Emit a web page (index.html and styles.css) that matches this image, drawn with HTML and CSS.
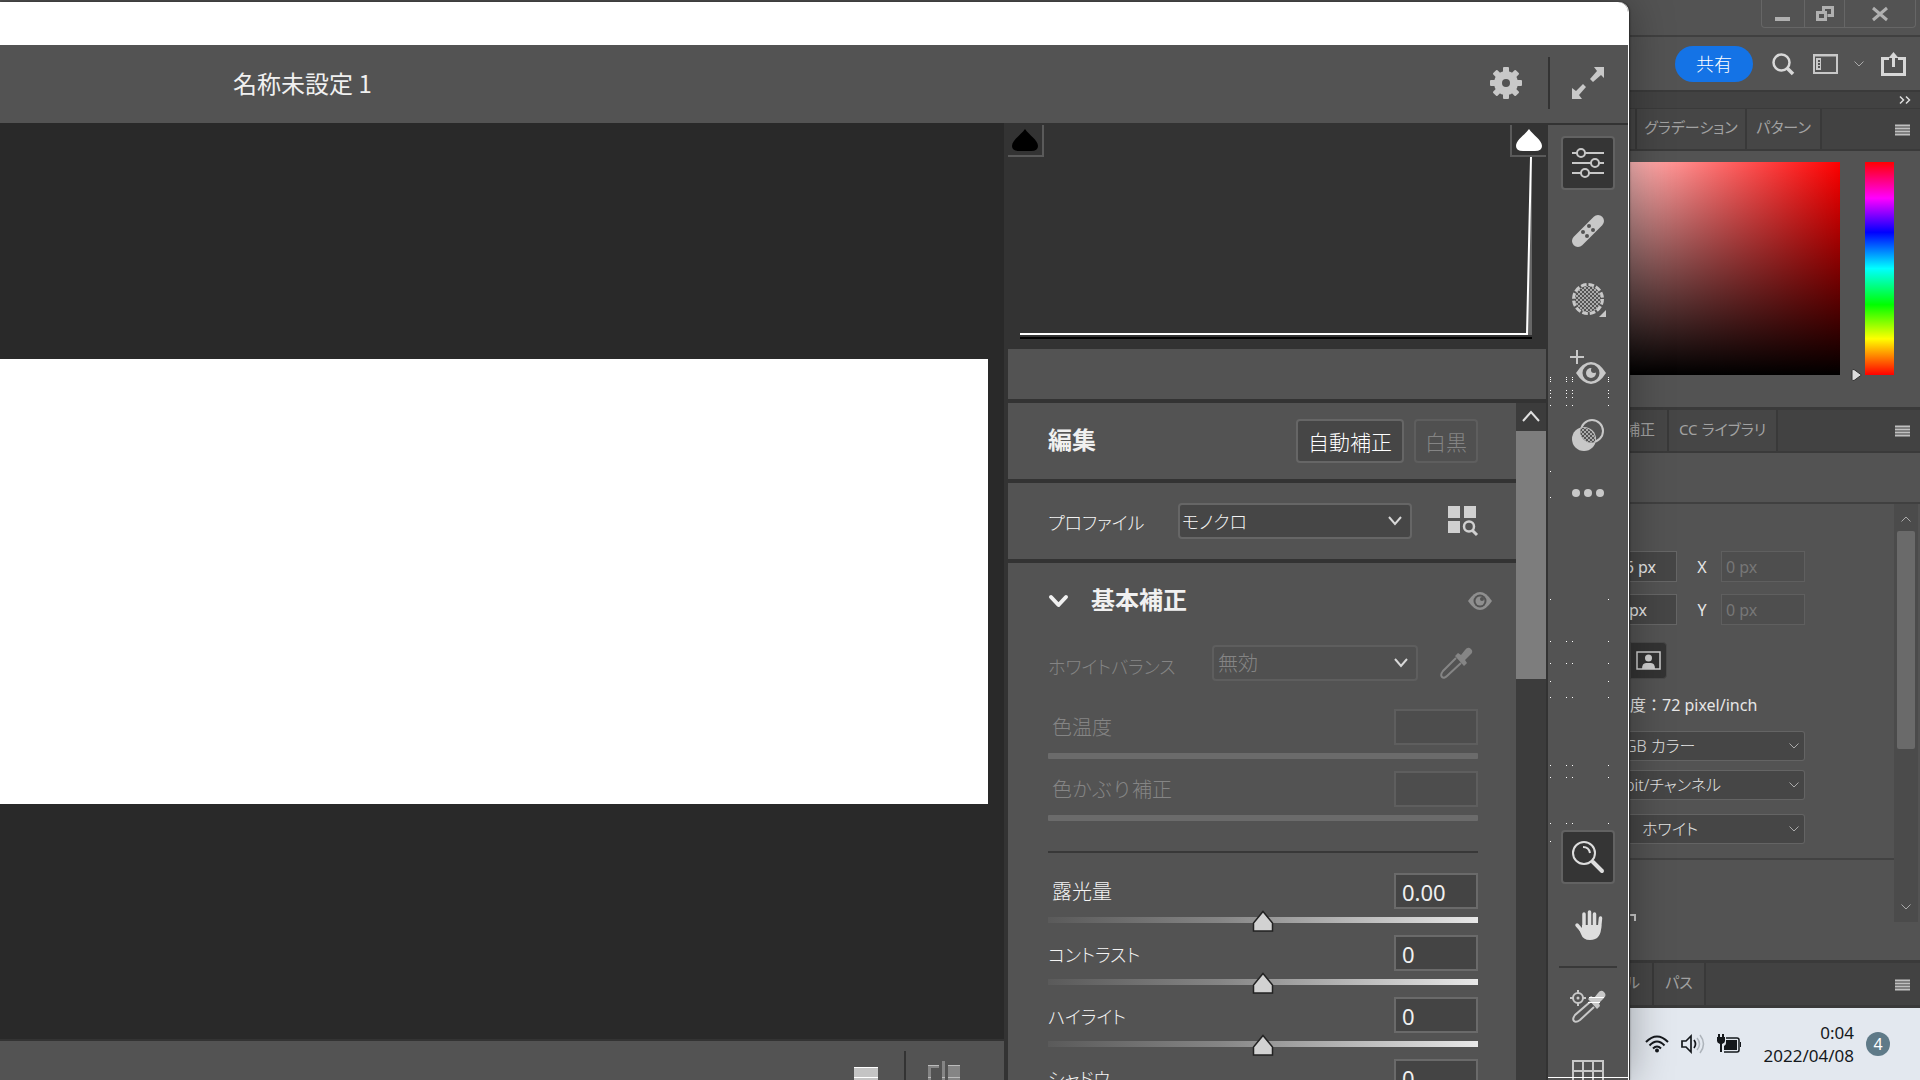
FILE: index.html
```html
<!DOCTYPE html>
<html lang="ja">
<head>
<meta charset="utf-8">
<title>Camera Raw</title>
<link rel="stylesheet" href="styles.css">
</head>
<body>
<div class="screen">
  <section class="dialog">
    <div class="titlebar"></div>
    <header class="head">
      <h1 class="doc-name">名称未設定 1</h1>
      <button class="icon-btn gear" aria-label="設定"><svg width="32" height="32" viewBox="0 0 32 32"><g fill="#c8c8c8"><g id="teeth"><rect x="13" y="0" width="6" height="32" rx="1"/><rect x="0" y="13" width="32" height="6" rx="1"/></g><use href="#teeth" transform="rotate(45 16 16)"/><circle cx="16" cy="16" r="12"/></g><circle cx="16" cy="16" r="4" fill="#535353"/></svg></button>
      <span class="head-rule"></span>
      <button class="icon-btn expand" aria-label="全画面"><svg width="32" height="32" viewBox="0 0 32 32"><path fill="#c8c8c8" d="M22 0h10v11l-3-3-8 7-3-3 7-8zM10 32H0V21l4 3 7-7 3 3-7 8z"/></svg></button>
    </header>

    <div class="work">
      <main class="preview">
        <div class="stage"><div class="picture"></div></div>
        <footer class="foot">
          <button class="icon-btn" aria-label="単一表示"><svg width="24" height="20" viewBox="0 0 24 20"><path fill="#c4c4c4" d="M0 0h24v20H0z"/><path stroke="#fff" d="M0 .5h24M0 10.500h24"/></svg></button>
          <span class="foot-rule"></span>
          <button class="icon-btn split" aria-label="補正前と補正後"><svg width="32" height="26" viewBox="0 0 32 26"><path fill="#858585" d="M0 4h11v3H3v19H0zM14 0h3v26h-3zM20 4h12v22H20z"/><path stroke="#bbb" d="M0 4.500h11M20 4.500h12M0 16.500h3m11 0h3m3 0h12"/></svg></button>
        </footer>
      </main>

      <aside class="edit">
        <div class="histogram">
          <button class="clip dark" aria-label="シャドウクリッピング"><svg width="28" height="24" viewBox="0 0 28 24"><path d="M14 1C18 7 27 12 27 18q0 5-7 5H8q-7 0-7-5C1 12 10 7 14 1z"/></svg></button>
          <svg class="graph" viewBox="0 0 512 214" preserveAspectRatio="none"><path d="M512 32 507 210h5z" fill="#666"/><path d="M0 209h507L511 32" fill="none" stroke="#fff" stroke-width="2"/><path d="M0 213h512" stroke="#000" stroke-width="2"/></svg>
          <button class="clip light" aria-label="ハイライトクリッピング"><svg width="28" height="24" viewBox="0 0 28 24"><path fill="#fff" d="M14 1C18 7 27 12 27 18q0 5-7 5H8q-7 0-7-5C1 12 10 7 14 1z"/></svg></button>
        </div>
        <div class="info"></div>
        <div class="scroll-area">
          <div class="sections">
            <section class="sec bar">
              <h2>編集</h2>
              <button class="text-btn auto">自動補正</button>
              <button class="text-btn mono" disabled>白黒</button>
            </section>
            <section class="sec bar">
              <label class="kana" for="profile">プロファイル</label>
              <span class="pick profile"><select id="profile"><option>モノクロ</option></select><svg width="14" height="10" viewBox="0 0 14 10"><path d="m1 1 6 7 6-7"/></svg></span>
              <button class="icon-btn browse" aria-label="プロファイルを参照"><svg width="30" height="30" viewBox="0 0 30 30"><path fill="#d0d0d0" d="M0 0h12v12H0zM16 0h12v12H16zM0 15h12v12H0z"/><circle cx="21" cy="20.500" r="5" fill="none" stroke="#d0d0d0" stroke-width="2.500"/><path stroke="#d0d0d0" stroke-width="3" d="m24 24 5 5"/></svg></button>
            </section>
            <section class="sec basic">
              <div class="basic-head">
                <button class="icon-btn fold" aria-label="折りたたむ"><svg width="21" height="15" viewBox="0 0 21 15"><path fill="none" stroke="#f0f0f0" stroke-width="4" stroke-linecap="round" stroke-linejoin="round" d="m3 3 7.500 8L18 3"/></svg></button>
                <h2>基本補正</h2>
                <button class="icon-btn eye" aria-label="表示"><svg width="24" height="18" viewBox="0 0 24 18"><path fill="#8f8f8f" d="M0 9Q6 0 12 0t12 9q-6 9-12 9T0 9z"/><circle cx="12" cy="9" r="6.500" fill="#535353"/><circle cx="12" cy="9" r="4.500" fill="#8f8f8f"/><circle cx="14" cy="7" r="2" fill="#535353"/></svg></button>
              </div>
              <div class="wb off">
                <label class="kana" for="wb">ホワイトバランス</label>
                <span class="pick white"><select id="wb" disabled><option>無効</option></select><svg width="14" height="10" viewBox="0 0 14 10"><path d="m1 1 6 7 6-7"/></svg></span>
                <button class="icon-btn dropper" aria-label="ホワイトバランスツール"><svg width="32" height="32" viewBox="0 0 32 32"><path fill="#858585" d="m15 9 3-3 3 2 4-5q3-4 6-1t-1 6l-5 5 2 3-3 3z"/><path fill="none" stroke="#858585" stroke-width="2" d="M16 11 3 24q-3 4-1 6t5-1l14-13"/></svg></button>
              </div>
              <div class="row off"><label class="kanji" for="temp">色温度</label><input id="temp" class="val" disabled><input type="range" aria-label="色温度" disabled></div>
              <div class="row off"><label class="kanji" for="tint">色かぶり補正</label><input id="tint" class="val" disabled><input type="range" aria-label="色かぶり補正" disabled></div>
              <hr>
              <div class="row"><label class="kanji" for="expo">露光量</label><input id="expo" class="val" value="0.00"><input type="range" aria-label="露光量"></div>
              <div class="row"><label class="kana" for="cont">コントラスト</label><input id="cont" class="val" value="0"><input type="range" aria-label="コントラスト"></div>
              <div class="row"><label class="kana" for="high">ハイライト</label><input id="high" class="val" value="0"><input type="range" aria-label="ハイライト"></div>
              <div class="row"><label class="kana" for="shad">シャドウ</label><input id="shad" class="val" value="0"><input type="range" aria-label="シャドウ"></div>
            </section>
          </div>
          <div class="scrollbar"><button class="arrow" aria-label="上へ"><svg width="18" height="12" viewBox="0 0 18 12"><path fill="none" stroke="#e0e0e0" stroke-width="2" d="m1 11 8-9 8 9"/></svg></button><div class="thumb"></div></div>
        </div>
      </aside>

      <nav class="tools">
        <button class="tool on" aria-label="編集"><svg width="32" height="32" viewBox="0 0 32 32"><g fill="#353535" stroke="#c8c8c8" stroke-width="2"><path d="M0 6h32M0 16h32M0 26h32"/><circle cx="9" cy="6" r="4"/><circle cx="23" cy="16" r="4"/><circle cx="13" cy="26" r="4"/></g></svg></button>
        <button class="tool" aria-label="修復"><svg width="34" height="34" viewBox="0 0 34 34"><path stroke="#c8c8c8" stroke-width="12" stroke-linecap="round" d="M7 27 27 7"/><g fill="#535353"><circle cx="18" cy="12" r="2"/><circle cx="12" cy="18" r="2"/><circle cx="22" cy="16" r="2"/><circle cx="16" cy="22" r="2"/></g></svg></button>
        <button class="tool" aria-label="マスク"><svg width="36" height="36" viewBox="0 0 36 36"><defs><pattern id="check" width="4" height="4" patternUnits="userSpaceOnUse"><path fill="#aaa" d="M0 0h2v2H0zM2 2h2v2H2z"/></pattern></defs><circle cx="18" cy="18" r="13" fill="url(#check)"/><circle cx="18" cy="18" r="14.500" fill="none" stroke="#c8c8c8" stroke-width="3" stroke-dasharray="5.600 2"/><path fill="#c8c8c8" d="M36 29v7h-7z"/></svg></button>
        <button class="tool" aria-label="赤目"><svg width="36" height="36" viewBox="0 0 36 36"><path stroke="#c8c8c8" stroke-width="2" d="M0 8h14M7 1v14"/><path fill="#c8c8c8" d="M6 24q7-11 15-11t15 11q-7 11-15 11T6 24z"/><circle cx="21" cy="24" r="8.500" fill="#535353"/><circle cx="21" cy="24" r="5" fill="#c8c8c8"/><circle cx="24" cy="21" r="3" fill="#535353"/></svg></button>
        <button class="tool" aria-label="プリセット"><svg width="32" height="32" viewBox="0 0 32 32"><circle cx="20" cy="12" r="11" fill="none" stroke="#c8c8c8" stroke-width="2"/><circle cx="12" cy="20" r="12" fill="#c8c8c8"/><path fill="#535353" d="M9 9a12 12 0 0 1 14 14A11 11 0 0 1 9 9z"/><path fill="url(#check)" d="M9 9a12 12 0 0 1 14 14A11 11 0 0 1 9 9z"/></svg></button>
        <button class="tool more" aria-label="その他"><svg width="32" height="8" viewBox="0 0 32 8"><g fill="#c8c8c8"><circle cx="4" cy="4" r="4"/><circle cx="16" cy="4" r="4"/><circle cx="28" cy="4" r="4"/></g></svg></button>
        <button class="tool on zoom" aria-label="ズーム"><svg width="32" height="32" viewBox="0 0 32 32"><g fill="none" stroke="#dedede"><circle cx="12" cy="12" r="11" stroke-width="2"/><path stroke-width="2" d="M11 6q6 0 7 6"/><path stroke-width="4" stroke-linecap="round" d="m21 21 9 9"/></g></svg></button>
        <button class="tool" aria-label="手のひら"><svg width="28" height="32" viewBox="0 0 28 32"><g fill="none" stroke="#dedede" stroke-linecap="round" stroke-width="3.500"><path d="M10 18V5M15.500 17V3M20.500 18V5M25.500 19l1-10M9 23l-6-7"/></g><path fill="#dedede" d="M8 16h19.200q.5 15-11.200 15-7 0-9-6l-3-7 4 2z"/></svg></button>
        <span class="tool-rule"></span>
        <button class="tool sampler" aria-label="サンプラー"><svg width="36" height="34" viewBox="0 0 36 34"><g fill="none" stroke="#c8c8c8" stroke-width="2"><circle cx="8" cy="8" r="5"/><path d="M8 0v4M8 12v4M0 8h4M12 8h4"/><path d="M20 12 5 25q-3 4-1 6t6-1l14-13"/></g><circle cx="8" cy="8" r="1.500" fill="#c8c8c8"/><path fill="#c8c8c8" d="m18 9 3-3 3 2 4-5q3-4 6-1t0 6l-5 5 1 3-3 3z"/><path stroke="#fff" d="M19 7.500h15M18 12.500h12"/></svg></button>
        <button class="tool grid" aria-label="グリッド"><svg width="32" height="32" viewBox="0 0 32 32"><path fill="none" stroke="#c8c8c8" stroke-width="2" d="M1 1h30v30H1zM11 1v30M21 1v30M1 11h30M1 21h30"/></svg></button>
        <svg class="specks" width="60" height="466" viewBox="0 0 60 466"><g fill="none" stroke="#fff" stroke-width="1"><g id="four"><path d="M0 .500h1M16 .500h1M22 .500h1M58 .500h1"/></g><use href="#four" y="2"/><use href="#four" y="4"/><use href="#four" y="13"/><use href="#four" y="16"/><use href="#four" y="20"/><use href="#four" y="28"/><use href="#four" y="264"/><use href="#four" y="286"/><use href="#four" y="320"/><use href="#four" y="388"/><use href="#four" y="400"/><use href="#four" y="446"/><path d="M0 94.500h1M0 120.500h1M0 222.500h1M58 222.500h1M0 304.500h1M58 304.500h1M0 464.500h1"/></g></svg>
      </nav>
    </div>
  </section>

  <section class="host">
    <div class="win-row">
      <div class="win-btns">
        <button class="w-min" aria-label="最小化"><svg width="16" height="6"><path fill="#b0b0b0" d="M0 1h15v4H0z"/></svg></button>
        <button class="w-max" aria-label="元に戻す"><svg width="18" height="16" viewBox="0 0 18 16"><path fill="none" stroke="#b0b0b0" stroke-width="3" d="M7.500 6.500v-5h9v8h-5M1.500 6.500h8v7h-8z"/></svg></button>
        <button class="w-close" aria-label="閉じる"><svg width="16" height="14" viewBox="0 0 16 14"><path stroke="#b0b0b0" stroke-width="3" d="m1 1 14 12M15 1 1 13"/></svg></button>
      </div>
    </div>
    <div class="app-bar">
      <button class="share">共有</button>
      <button class="icon-btn" aria-label="検索"><svg width="22" height="22" viewBox="0 0 22 22"><g fill="none" stroke="#d8d8d8"><circle cx="9.500" cy="9.500" r="8" stroke-width="2.500"/><path stroke-width="3.500" d="m15 15 6 6"/></g></svg></button>
      <button class="icon-btn" aria-label="ワークスペース"><svg width="25" height="20" viewBox="0 0 25 20"><path fill="none" stroke="#c8c8c8" stroke-width="2" d="M1 1h23v18H1zM1 1.500h23"/><path fill="#c8c8c8" d="M3 4h5v12H3z"/><path fill="#535353" d="M5 6h2v2H5zM5 9h2v2H5zM5 12h2v2H5z"/></svg></button>
      <svg class="tiny" width="10" height="6" viewBox="0 0 10 6"><path fill="none" stroke="#aaa" d="m.5.5 4.500 4.500L9.500.5"/></svg>
      <button class="icon-btn" aria-label="書き出し"><svg width="25" height="24" viewBox="0 0 25 24"><path fill="none" stroke="#d8d8d8" stroke-width="3" d="M8 6.500H1.500v16h22v-16H17M12.500 15V4"/><path fill="#d8d8d8" d="m12.500 0 5 6h-10z"/></svg></button>
    </div>
    <div class="collapse"><svg width="12" height="8" viewBox="0 0 12 8"><path fill="none" stroke="#ddd" stroke-width="1.500" d="m1 .5 3.500 3.500L1 7.500M7 .5 10.500 4 7 7.500"/></svg></div>
    <div class="tabs">
      <span class="tab t-stub"></span><button class="tab t-grad">グラデーション</button><button class="tab t-pat">パターン</button>
      <svg class="burger" width="15" height="11"><path stroke="#c0c0c0" d="M0 .5h15M0 3.500h15M0 6.500h15M0 9.500h15" stroke-width="2"/></svg>
    </div>
    <div class="color">
      <div class="field"></div>
      <svg class="mark" width="12" height="12" viewBox="0 0 12 12"><path fill="#ddd" stroke="#333" d="M1 1.500q0-1 2-1L10.500 6 3 11.500q-2 0-2-1z"/></svg>
      <div class="hue"></div>
    </div>
    <div class="tabs second">
      <button class="tab t-adj">補正</button><button class="tab t-lib">CC ライブラリ</button>
      <svg class="burger" width="15" height="11"><path stroke="#c0c0c0" d="M0 .5h15M0 3.500h15M0 6.500h15M0 9.500h15" stroke-width="2"/></svg>
    </div>
    <div class="panel-top"></div>
    <div class="props">
      <div class="props-main">
        <div class="dims">
          <input class="dim w" value="6 px" aria-label="W"><label for="px">X</label><input id="px" class="dim" value="0 px" disabled>
          <input class="dim h" value="px" aria-label="H"><label for="py">Y</label><input id="py" class="dim" value="0 px" disabled>
        </div>
        <button class="orient" aria-label="横向き"><svg width="25" height="19" viewBox="0 0 25 19"><path fill="none" stroke="#d0d0d0" stroke-width="1.500" d="M1 1h23v17H1z"/><circle cx="12.500" cy="7" r="3.500" fill="#d0d0d0"/><path fill="#d0d0d0" d="M6 18q0-6 4-6h5q4 0 4 6z"/></svg></button>
        <p class="res"><span>度：72 pixel/inch</span></p>
        <span class="combo wide"><select aria-label="モード"><option>GB カラー</option></select><svg width="10" height="6" viewBox="0 0 10 6"><path d="m.5.5 4.500 4.500L9.500.5"/></svg></span>
        <span class="combo wide"><select aria-label="ビット数"><option>bit/チャンネル</option></select><svg width="10" height="6" viewBox="0 0 10 6"><path d="m.5.5 4.500 4.500L9.500.5"/></svg></span>
        <span class="combo fill"><select aria-label="カンバス"><option>ホワイト</option></select><svg width="10" height="6" viewBox="0 0 10 6"><path d="m.5.5 4.500 4.500L9.500.5"/></svg></span>
        <div class="rest"><svg width="6" height="7"><path fill="none" stroke="#ccc" stroke-width="2" d="M0 1h5v6"/></svg></div>
      </div>
      <div class="rail"><svg width="10" height="6" viewBox="0 0 10 6"><path d="M.5 5.500 5 1l4.500 4.500"/></svg><div class="rail-thumb"></div><svg width="10" height="6" viewBox="0 0 10 6"><path d="m.5.5 4.500 4.500L9.500.5"/></svg></div>
    </div>
    <div class="tabs third">
      <button class="tab t-ch">ル</button><button class="tab t-path">パス</button>
      <svg class="burger" width="15" height="11"><path stroke="#c0c0c0" d="M0 .5h15M0 3.500h15M0 6.500h15M0 9.500h15" stroke-width="2"/></svg>
    </div>
    <footer class="taskbar">
      <svg width="24" height="18" viewBox="0 0 24 18"><g fill="none" stroke="#15181c" stroke-width="2"><path d="M1 7Q12-4 23 7M4.500 10.500Q12 2.500 19.500 10.500M8 13.500q4-4 8 0"/></g><circle cx="12" cy="15.500" r="2" fill="#15181c"/></svg>
      <svg width="24" height="20" viewBox="0 0 24 20"><path fill="none" stroke="#15181c" stroke-width="1.700" d="M1 7h4l5-5v16l-5-5H1zM13 6q3 4 0 8"/><path fill="none" stroke="#aeb4bb" stroke-width="1.500" d="M16 4q5 6 0 12M19 1q7 9 0 18"/></svg>
      <svg width="25" height="20" viewBox="0 0 25 20"><path fill="#15181c" d="M1 0h2v3h2V0h2v3h1v4q0 2-3 3v8H3v-8Q0 9 0 7V3h1zM9 6h11v10H7v-4q2-1 2-3zM23 8h1v5h-1z"/><path fill="none" stroke="#15181c" stroke-width="1.500" d="M9 4h11q2 0 2 2v10q0 2-2 2H7"/></svg>
      <div class="clock"><span>0:04</span><span>2022/04/08</span></div>
      <span class="badge">4</span>
    </footer>
  </section>
</div>
</body>
</html>
```
FILE: styles.css
```css
* { box-sizing: border-box; margin: 0; }
body {
  background: #535353;
  color: #e6e6e6;
  font-family: "Noto Sans", "Noto Sans CJK JP", sans-serif;
  overflow: hidden;
}
button, input, select { font: inherit; color: inherit; border: 0; background: none; padding: 0; appearance: none; border-radius: 0; }
button { display: flex; align-items: center; justify-content: center; }
svg { display: block; flex: none; overflow: visible; }
.screen { display: grid; grid-template-columns: minmax(0, 1fr) 290px; height: 100vh; }

/* Camera Raw window */
.dialog {
  position: relative;
  z-index: 1;
  margin-top: 2px;
  display: flex;
  flex-direction: column;
  min-height: 0;
  background: #535353;
  border-right: 1px solid #fff;
  margin-right: 1px;
  border-radius: 0 10px 0 0;
  box-shadow: 0 0 44px rgba(0, 0, 0, .35), 1px 0 2px rgba(0, 0, 0, .4);
}
.titlebar { height: 43px; background: #fff; border-radius: 0 10px 0 0; flex: none; }
.head { height: 78px; flex: none; display: flex; align-items: center; padding: 0 24px 2px 233px; }
.doc-name { font-family: "Noto Sans CJK JP", sans-serif; font-size: 24px; font-weight: 400; line-height: 32px; flex: 1; color: #f0f0f0; }
.head-rule { width: 2px; height: 52px; background: #333; margin: 0 22px 0 26px; }
.work { flex: 1; min-height: 0; display: grid; grid-template-columns: minmax(0, 1fr) 4px 540px 80px; }
.preview { grid-column: 1; display: flex; flex-direction: column; min-height: 0; min-width: 0; }
.stage { flex: 1; background: #292929; display: flex; align-items: center; padding-right: 16px; }
.picture { width: 100%; aspect-ratio: 988 / 445; background: #fff; }
.foot { height: 41px; overflow: hidden; border-top: 2px solid #333; display: flex; justify-content: flex-end; align-items: flex-start; padding: 0 44px 0 0; }
.foot > :first-child { margin-top: 26px; }
.foot-rule { width: 2px; height: 30px; background: #333; margin: 10px 22px 0 26px; }
.foot .split { margin-top: 20px; }

/* adjustment column */
.edit { grid-column: 2 / 4; background: #333; display: flex; flex-direction: column; min-height: 0; padding: 2px 2px 0 4px; }
.histogram { height: 224px; flex: none; display: grid; grid-template-columns: 36px 1fr 36px; }
.clip { height: 32px; align-self: start; border-bottom: 2px solid #5a5a5a; grid-row: 1; z-index: 1; background: #333; }
.clip.dark { grid-column: 1; border-right: 2px solid #5a5a5a; }
.clip.light { grid-column: 3; border-left: 2px solid #5a5a5a; }
.graph { grid-column: 1 / 4; grid-row: 1; width: auto; height: 214px; margin: 0 14px 0 12px; overflow: hidden; justify-self: stretch; }
.info { height: 50px; flex: none; background: #535353; margin-bottom: 4px; }
.scroll-area { flex: 1; min-height: 0; display: flex; overflow: hidden; }
.sections { flex: 1; display: flex; flex-direction: column; gap: 4px; }
.sec { background: #535353; padding: 0 38px 0 40px; flex: none; }
.bar { height: 76px; display: flex; align-items: center; }
h2 { font-family: "Noto Sans CJK JP", sans-serif; font-size: 24px; line-height: 32px; font-weight: 700; color: #f0f0f0; flex: 1; padding-bottom: 4px; }
.text-btn { height: 44px; border: 2px solid #666; border-radius: 4px; background: #464646; font-family: "Noto Sans CJK JP", sans-serif; font-size: 21px; line-height: 24px; font-weight: 300; color: #fff; }
.auto { width: 108px; margin-right: 10px; }
.mono { width: 64px; background: #505050; border-color: #5e5e5e; color: #858585; }
.sec label { font-family: "Noto Sans CJK JP", sans-serif; line-height: 28px; font-weight: 300; color: #f4f4f4; }
.sec .kana { font-size: 18px; font-feature-settings: "palt"; padding-top: 2px; }
.sec .kanji { font-size: 20px; padding-left: 4px; }
.bar .kana { flex: 1; }
.pick { display: flex; align-items: center; height: 36px; border: 2px solid #666; border-radius: 4px; background: #464646; padding: 0 8px 0 2px; }
.pick select { flex: 1; min-width: 0; font-family: "Noto Sans CJK JP", sans-serif; font-size: 18px; line-height: 28px; font-weight: 300; font-feature-settings: "palt"; color: #f4f4f4; }
.pick path { fill: none; stroke: #d8d8d8; stroke-width: 2; }
.profile { width: 234px; margin-right: 36px; }
.basic { flex: 1 0 auto; }
.basic-head { height: 76px; display: flex; align-items: center; }
.basic-head h2 { margin-left: 22px; }
.eye { margin-right: -14px; }
.wb { height: 48px; display: flex; align-items: center; margin-bottom: 22px; }
.wb .kana { flex: 1; padding-top: 6px; }
.white { width: 206px; border-color: #5e5e5e; background: #505050; margin-right: 22px; padding-left: 4px; }
.sec .white select { font-size: 20px; }
.dropper { margin-right: 6px; }
.sec .off label, .sec .off select:disabled { color: #858585; opacity: 1; }
.row { display: grid; grid-template-columns: 1fr 84px; row-gap: 8px; height: 62px; align-content: start; align-items: center; }
.val { height: 36px; width: 84px; border: 2px solid #6a6a6a; background: #444; font-size: 22px; line-height: 28px; padding: 2px 6px 0; color: #f0f0f0; }
.off .val { background: #4d4d4d; border-color: #5e5e5e; }
input[type=range] { grid-column: 1 / 3; height: 6px; width: 100%; background: linear-gradient(90deg, #5a5a5a, #858585 40%, #e8e8e8); }
.off input[type=range] { background: #6b6b6b; border-radius: 1px; }
input[type=range]::-webkit-slider-thumb {
  appearance: none; width: 22px; height: 22px; margin-top: 2px;
  background: url("data:image/svg+xml,%3Csvg xmlns='http://www.w3.org/2000/svg' viewBox='0 0 22 22'%3E%3Cpath d='M11 1.500 20.500 13v8h-19v-8z' fill='%23d2d2d2' stroke='%23222' stroke-width='1.500'/%3E%3C/svg%3E");
}
.off input[type=range]::-webkit-slider-thumb { visibility: hidden; }
.basic hr { border: 0; border-top: 2px solid #383838; margin: 18px 0 20px; }
.scrollbar { width: 30px; background: #3c3c3c; }
.arrow { width: 30px; height: 28px; padding-bottom: 3px; }
.thumb { height: 248px; background: #7d7d7d; }

/* tool column */
.tools { position: relative; border-top: 2px solid #333; display: flex; flex-direction: column; align-items: center; padding: 11px 0 0; min-height: 0; overflow: hidden; }
.tools::after { content: ""; position: absolute; left: 0; right: 0; bottom: 2px; height: 1px; background: #fff; }
.tool { width: 54px; height: 54px; flex: none; margin-bottom: 14px; border-radius: 4px; }
.on { background: #353535; border: 2px solid #626262; }
.more { height: 30px; margin-top: 2px; }
.zoom { margin-top: auto; }
.tool-rule { width: 58px; height: 2px; flex: none; background: #393939; margin-bottom: 12px; }
.sampler { margin-bottom: 26px; }
.grid { height: 20px; align-items: flex-start; margin: 0; overflow: hidden; }
.specks { position: absolute; left: 2px; top: 252px; }

/* host application */
.host { display: flex; flex-direction: column; min-width: 0; overflow: hidden; font-size: 16px; }
.win-row { height: 37px; flex: none; border-bottom: 2px solid #404040; display: flex; justify-content: flex-end; padding-right: 4px; }
.win-btns { display: flex; height: 28px; border: 1px solid #666; border-top: 0; border-radius: 0 0 4px 4px; }
.w-min { width: 42px; padding-top: 10px; }
.w-max { width: 41px; border: solid #666; border-width: 0 1px; }
.w-close { width: 70px; }
.app-bar { height: 53px; flex: none; display: flex; align-items: center; justify-content: space-between; padding: 0 14px 0 45px; }
.share { width: 78px; height: 36px; border-radius: 18px; background: #1473e6; color: #fff; font-size: 18px; line-height: 24px; font-weight: 300; }
.tiny { margin: 0 -2px; }
.collapse { height: 18px; flex: none; background: #424242; border-top: 2px solid #3a3a3a; display: flex; justify-content: flex-end; align-items: center; padding-right: 9px; }
.tabs { height: 43px; flex: none; background: #424242; border: solid #3a3a3a; border-width: 1px 0 2px; display: flex; align-items: center; }
.tab { height: 100%; flex: none; background: #464646; border-right: 2px solid #393939; color: #a2a2a2; font-size: 15px; line-height: 24px; font-feature-settings: "palt"; white-space: nowrap; padding-bottom: 4px; }
.t-stub { width: 7px; }
.t-grad { width: 110px; }
.t-pat { width: 75px; }
.burger { margin: 2px 10px 0 auto; }
.color { flex: none; display: flex; align-items: flex-end; padding: 10px 26px 32px 0; height: 256px; }
.field { flex: 1; height: 213px; background: linear-gradient(to top, #000, transparent), linear-gradient(90deg, #ffb8b8, #f00); }
.mark { margin: 0 2px -6px 11px; }
.hue { width: 29px; height: 213px; background: linear-gradient(#f00, #f0f 17%, #00f 33%, #0ff 50%, #0f0 67%, #ff0 83%, #f00); }
.second { height: 46px; border-top-width: 3px; }
.t-adj { width: 39px; justify-content: flex-end; padding-right: 12px; }
.t-lib { width: 109px; }
.panel-top { height: 51px; flex: none; border-bottom: 2px solid #404040; }
.props { height: 456px; flex: none; display: flex; }
.props-main { flex: 1; min-width: 0; display: flex; flex-direction: column; padding-top: 47px; }
.dims { display: grid; grid-template-columns: 47px 44px 84px; row-gap: 12px; align-items: center; }
.dims label { text-align: center; line-height: 24px; padding-left: 6px; }
.dim { width: 100%; height: 31px; border: 1px solid #666; background: #464646; padding: 0 4px; line-height: 24px; min-width: 0; }
.dim.w, .dim.h { width: 72px; justify-self: end; padding: 0 20px 0 0; text-align: right; }
.dim.h { padding-right: 29px; }
.dim:disabled { background: #4e4e4e; border-color: #5f5f5f; color: #777; }
.orient { width: 37px; height: 37px; background: #333; border: 1px solid #4a4a4a; border-radius: 0 4px 4px 0; margin: 17px 0 14px; }
.res { line-height: 24px; height: 24px; margin-bottom: 14px; display: flex; }
.combo { width: 175px; height: 30px; display: flex; align-items: center; background: #464646; border: 1px solid #646464; border-left: 0; border-radius: 0 3px 3px 0; margin-bottom: 9px; padding-right: 5px; }
.combo.wide { width: 180px; margin-left: -5px; }
.combo select { flex: 1; min-width: 0; line-height: 24px; font-feature-settings: "palt"; font-weight: 300; }
.combo path, .rail path { fill: none; stroke: #aaa; }
.combo.fill { margin-top: 5px; padding-left: 12px; }
.rest { border-top: 2px solid #424242; flex: 1; margin-top: 5px; padding-top: 54px; }
.rail { width: 26px; border-right: 2px solid #535353; background: #4b4b4b; display: flex; flex-direction: column; align-items: center; padding: 12px 0; height: 418px; }
.rail-thumb { width: 18px; height: 218px; margin: 9px 0 auto; background: #6a6a6a; border-radius: 2px; }
.third { height: 48px; border-width: 3px 0; }
.t-ch { width: 24px; justify-content: flex-end; padding-right: 12px; }
.t-path { width: 52px; }
.taskbar { flex: 1; background: #e3e8ef; color: #15181c; display: flex; align-items: center; padding: 0 30px 0 15px; gap: 12px; }
.clock { margin-left: auto; display: flex; flex-direction: column; align-items: flex-end; font-size: 17px; line-height: 23px; }
.badge { width: 24px; height: 24px; border-radius: 50%; background: #5f7a88; color: #fff; text-align: center; font-size: 16px; line-height: 24px; }
```
